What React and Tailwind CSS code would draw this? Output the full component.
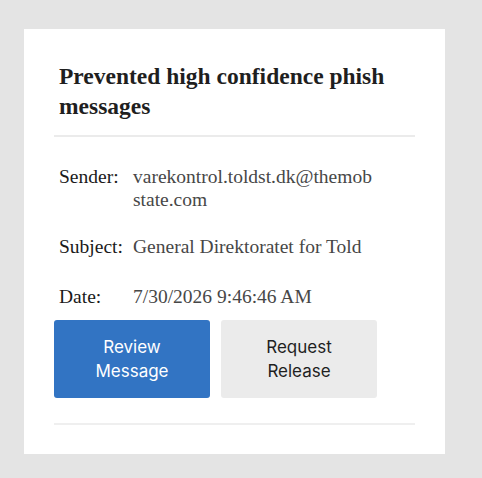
export default function App() {
  const serif = { fontFamily: '"Liberation Serif", "Times New Roman", serif' };
  return (
    <div className="min-h-[478px] w-[482px] bg-[#e4e4e4] pt-[29px] pl-[24px]">
      <div className="w-[421px] h-[425px] bg-white px-[30px] pt-[32px]" style={serif}>
        <h1 className="px-[5px] text-[23.5px] leading-[30px] font-bold text-[#1f1f1f]">
          Prevented high confidence phish messages
        </h1>
        <div className="mt-[14px] h-[2px] bg-[#ebebeb]" />
        <div className="px-[5px] pt-[28px] text-[19.5px] leading-[23px]">
          <div className="grid grid-cols-[74px_244px]">
            <div className="text-[#1a1a1a]">Sender:</div>
            <div className="text-[#474747] break-all">varekontrol.toldst.dk@themobstate.com</div>
          </div>
          <div className="grid grid-cols-[74px_244px] mt-[24px]">
            <div className="text-[#1a1a1a]">Subject:</div>
            <div className="text-[#474747]">General Direktoratet for Told</div>
          </div>
          <div className="grid grid-cols-[74px_244px] mt-[27px]">
            <div className="text-[#1a1a1a]">Date:</div>
            <div className="text-[#474747]">7/30/2026 9:46:46 AM</div>
          </div>
        </div>
        <div className="flex gap-[11px] mt-[12px]" style={{ fontFamily: 'Inter, "Liberation Sans", sans-serif' }}>
          <button className="w-[156px] h-[78px] rounded-[3px] bg-[#3274c3] text-white text-[17px] leading-[24px] flex items-center justify-center text-center">
            Review<br />Message
          </button>
          <button className="w-[156px] h-[78px] rounded-[3px] bg-[#ebebeb] text-[#1f1f1f] text-[17px] leading-[24px] flex items-center justify-center text-center">
            Request<br />Release
          </button>
        </div>
        <div className="mt-[25px] h-[2px] bg-[#efefef]" />
      </div>
    </div>
  );
}
